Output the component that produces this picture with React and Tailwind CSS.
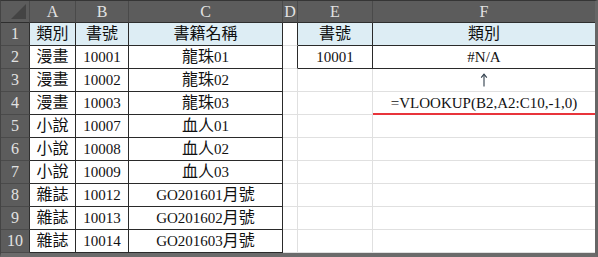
import React from "react";

const FONT = { fontFamily: '"Liberation Serif", "Noto Sans CJK TC", serif' };

const COLS = ["A", "B", "C", "D", "E", "F"];

const books = [
  ["類別", "書號", "書籍名稱"],
  ["漫畫", "10001", "龍珠01"],
  ["漫畫", "10002", "龍珠02"],
  ["漫畫", "10003", "龍珠03"],
  ["小說", "10007", "血人01"],
  ["小說", "10008", "血人02"],
  ["小說", "10009", "血人03"],
  ["雜誌", "10012", "GO201601月號"],
  ["雜誌", "10013", "GO201602月號"],
  ["雜誌", "10014", "GO201603月號"],
];

// lookup table in E1:F2
const lookup = [
  ["書號", "類別"],
  ["10001", "#N/A"],
];

const inTable = (r, c) =>
  (r >= 1 && r <= 10 && c >= 0 && c <= 2) ||
  (r >= 1 && r <= 2 && c >= 4 && c <= 5);

// Han characters get a slightly larger size than the Latin runs
function Mixed({ text }) {
  const parts = text.match(/[\u4e00-\u9fff]+|[^\u4e00-\u9fff]+/g) || [];
  return parts.map((p, i) =>
    /[\u4e00-\u9fff]/.test(p) ? (
      <span key={i} className="text-[16px]">
        {p}
      </span>
    ) : (
      <span key={i}>{p}</span>
    )
  );
}

function UpArrow() {
  return (
    <svg width="8" height="14" viewBox="0 0 8 14" fill="none">
      <path d="M4 1.5V13.5" stroke="#2f3d4a" strokeWidth="1.1" />
      <path d="M1.2 4.6L4 1.2L6.8 4.6" stroke="#2f3d4a" strokeWidth="1.1" />
    </svg>
  );
}

function Cell({ r, c, children }) {
  const darkR = inTable(r, c) || inTable(r, c + 1);
  const darkB = inTable(r, c) || inTable(r + 1, c);
  const isHead = r === 1 && inTable(r, c);
  const isLast = c === 5;
  const isFormula = r === 4 && c === 5;
  return (
    <div
      className={[
        "flex items-center justify-center overflow-hidden whitespace-nowrap text-[15px] leading-none text-[#111]",
        isLast ? "" : "border-r",
        darkR ? "border-r-[#2a2a2a]" : "border-r-[#e0e0e0]",
        isFormula ? "border-b-2 border-b-[#e8343b] pt-[1px]" : "border-b",
        isFormula ? "" : darkB ? "border-b-[#2a2a2a]" : "border-b-[#e0e0e0]",
        isHead ? "bg-[#ddedf4]" : "bg-white",
      ].join(" ")}
    >
      {children}
    </div>
  );
}

export default function App() {
  const rows = [];
  for (let r = 1; r <= 10; r++) {
    rows.push(
      <div
        key={`h${r}`}
        className="flex items-center justify-center border-r border-b border-r-[#2e2e2e] border-b-[#4a4a4a] bg-[#5c5c5c] text-[16px] leading-none text-[#e2e2e2]"
      >
        {r}
      </div>
    );
    for (let c = 0; c < 6; c++) {
      let content = null;
      if (c <= 2) content = <Mixed text={books[r - 1][c]} />;
      else if (c >= 4 && r <= 2) content = <Mixed text={lookup[r - 1][c - 4]} />;
      else if (c === 5 && r === 3) content = <UpArrow />;
      else if (c === 5 && r === 4) content = <span>=VLOOKUP(B2,A2:C10,-1,0)</span>;
      rows.push(
        <Cell key={`${r}-${c}`} r={r} c={c}>
          {content}
        </Cell>
      );
    }
  }

  return (
    <div
      style={FONT}
      className="w-[598px] h-[257px] border-t border-l border-r-[3px] border-b-[4px] border-t-[#353535] border-l-[#444] border-r-[#666] border-b-[#6b6b6b] bg-white"
    >
      <div className="grid grid-cols-[29px_46px_53px_154px_15px_75px_222px] grid-rows-[22px_repeat(10,23px)]">
        {/* corner select-all box */}
        <div className="relative border-r border-b border-r-[#4a4a4a] border-b-[#2e2e2e] bg-[#5c5c5c]">
          <svg className="absolute right-[3px] bottom-[3px]" width="15" height="15" viewBox="0 0 15 15">
            <polygon points="15,0 15,15 0,15" fill="#444" />
          </svg>
        </div>
        {COLS.map((l, i) => (
          <div
            key={l}
            className={[
              "flex items-center justify-center overflow-hidden border-b border-b-[#2e2e2e] bg-[#5c5c5c] text-[16px] leading-none text-[#e2e2e2]",
              i === 5 ? "" : "border-r border-r-[#4a4a4a]",
            ].join(" ")}
          >
            {l}
          </div>
        ))}
        {rows}
      </div>
    </div>
  );
}
